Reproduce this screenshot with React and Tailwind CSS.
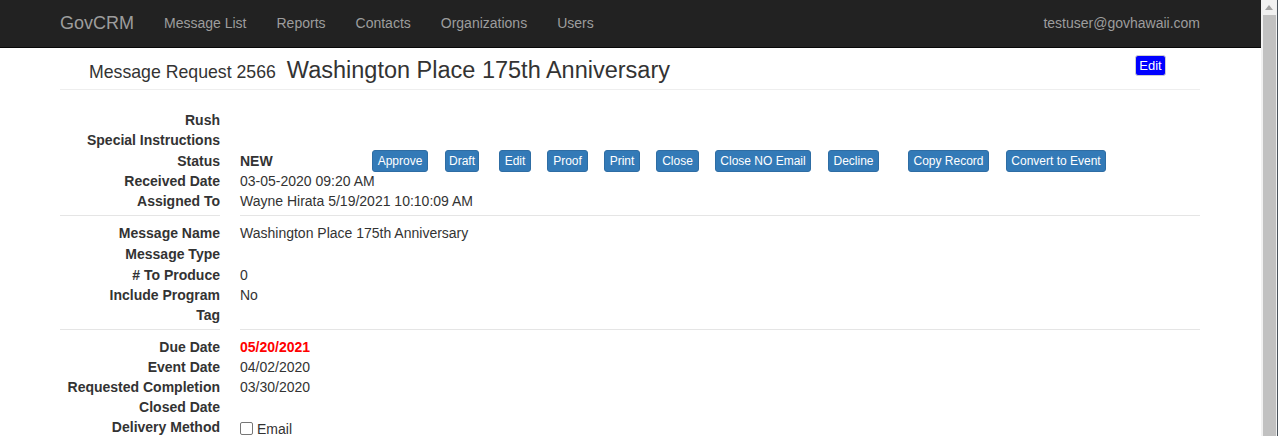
const navLinks = ['Message List', 'Reports', 'Contacts', 'Organizations', 'Users']

const actions = [
  { label: 'Approve', w: 56, ml: 0 },
  { label: 'Draft', w: 34, ml: 17 },
  { label: 'Edit', w: 32, ml: 20 },
  { label: 'Proof', w: 41, ml: 16 },
  { label: 'Print', w: 36, ml: 16 },
  { label: 'Close', w: 43, ml: 16 },
  { label: 'Close NO Email', w: 96, ml: 16 },
  { label: 'Decline', w: 51, ml: 17 },
  { label: 'Copy Record', w: 81, ml: 29 },
  { label: 'Convert to Event', w: 100, ml: 17 },
]

function Row({ label, children, className = 'h-[20px]' }) {
  return (
    <div className={`flex items-center ${className}`}>
      <dt className="w-[160px] shrink-0 text-right font-bold whitespace-nowrap">{label}</dt>
      <dd className="ml-[20px] flex-1 flex items-center">{children}</dd>
    </div>
  )
}

function Divider({ className }) {
  return (
    <div className={`flex ${className}`}>
      <div className="w-[160px] h-px bg-[#e5e5e5]" />
      <div className="ml-[20px] flex-1 h-px bg-[#e5e5e5]" />
    </div>
  )
}

function Navbar() {
  return (
    <nav className="h-[48px] bg-[#222222] border-b border-[#080808]">
      <div className="w-[1170px] ml-[45px] px-[15px] flex items-center h-full pb-[1px]">
        <span className="text-[18px] text-[#9d9d9d] leading-[20px]">GovCRM</span>
        <ul className="flex ml-[15px]">
          {navLinks.map((l) => (
            <li key={l} className="px-[15px] text-[14px] leading-[20px] text-[#9d9d9d]">{l}</li>
          ))}
        </ul>
        <span className="ml-auto text-[14px] leading-[20px] text-[#9d9d9d]">testuser@govhawaii.com</span>
      </div>
    </nav>
  )
}

function Scrollbar() {
  return (
    <div className="w-[17px] h-[436px] bg-[#f1f1f1] flex shrink-0">
      <div className="w-[16px] flex flex-col items-center">
        <div className="h-[15px] flex items-center justify-center">
          <svg width="8" height="5" viewBox="0 0 8 5"><polygon points="0,5 8,5 4,0" fill="#a3a3a3" /></svg>
        </div>
        <div className="w-[13px] flex-1 bg-[#c1c1c1]" />
      </div>
      <div className="w-px bg-[#4a535c]" />
    </div>
  )
}

export default function App() {
  return (
    <div className="flex h-[436px] overflow-hidden bg-white text-[#333333] text-[14px] leading-[20px]" style={{ fontFamily: '"Liberation Sans", Arial, sans-serif' }}>
      <div className="flex-1 min-w-0">
        <Navbar />
        <div className="w-[1170px] ml-[45px] px-[15px]">
          <div className="flex items-start border-b border-[#eeeeee] h-[42px]">
            <h1 className="flex items-baseline pl-[29px] pt-[12px]">
              <span className="text-[17.7px]">Message Request 2566</span>
              <span className="text-[23.5px] ml-[11px]">Washington Place 175th Anniversary</span>
            </h1>
            <button className="ml-auto mr-[34px] mt-[7px] w-[31px] h-[21px] bg-[#0000ff] text-white text-[13px] leading-[18px] border border-[#cfcfcf] rounded-[3px]">Edit</button>
          </div>

          <dl className="mt-[20px]">
            <Row label="Rush" />
            <Row label="Special Instructions" />
            <Row label="Status" className="h-[21px]">
              <span className="font-bold w-[132px]">NEW</span>
              {actions.map((a) => (
                <button
                  key={a.label}
                  className="h-[22px] bg-[#337ab7] border border-[#2e6da4] rounded-[3px] text-white text-[12px] leading-[18px] shrink-0"
                  style={{ width: a.w, marginLeft: a.ml }}
                >
                  {a.label}
                </button>
              ))}
            </Row>
            <Row label="Received Date">03-05-2020 09:20 AM</Row>
            <Row label="Assigned To">Wayne Hirata 5/19/2021 10:10:09 AM</Row>
          </dl>

          <Divider className="mt-[4px] mb-[8px]" />

          <dl>
            <Row label="Message Name" className="h-[18px]">Washington Place 175th Anniversary</Row>
            <Row label="Message Type" className="h-[23px]" />
            <Row label="# To Produce">0</Row>
            <Row label="Include Program">No</Row>
            <Row label="Tag" />
          </dl>

          <Divider className="mt-[4px] mb-[7px]" />

          <dl>
            <Row label="Due Date"><span className="font-bold text-[#ff0000]">05/20/2021</span></Row>
            <Row label="Event Date">04/02/2020</Row>
            <Row label="Requested Completion">03/30/2020</Row>
            <Row label="Closed Date" />
            <Row label="Delivery Method">
              <span className="w-[13px] h-[13px] border border-[#767676] rounded-[2px] bg-white mt-[3px]" />
              <span className="ml-[4px] mt-[4px]">Email</span>
            </Row>
          </dl>
        </div>
      </div>
      <Scrollbar />
    </div>
  )
}
